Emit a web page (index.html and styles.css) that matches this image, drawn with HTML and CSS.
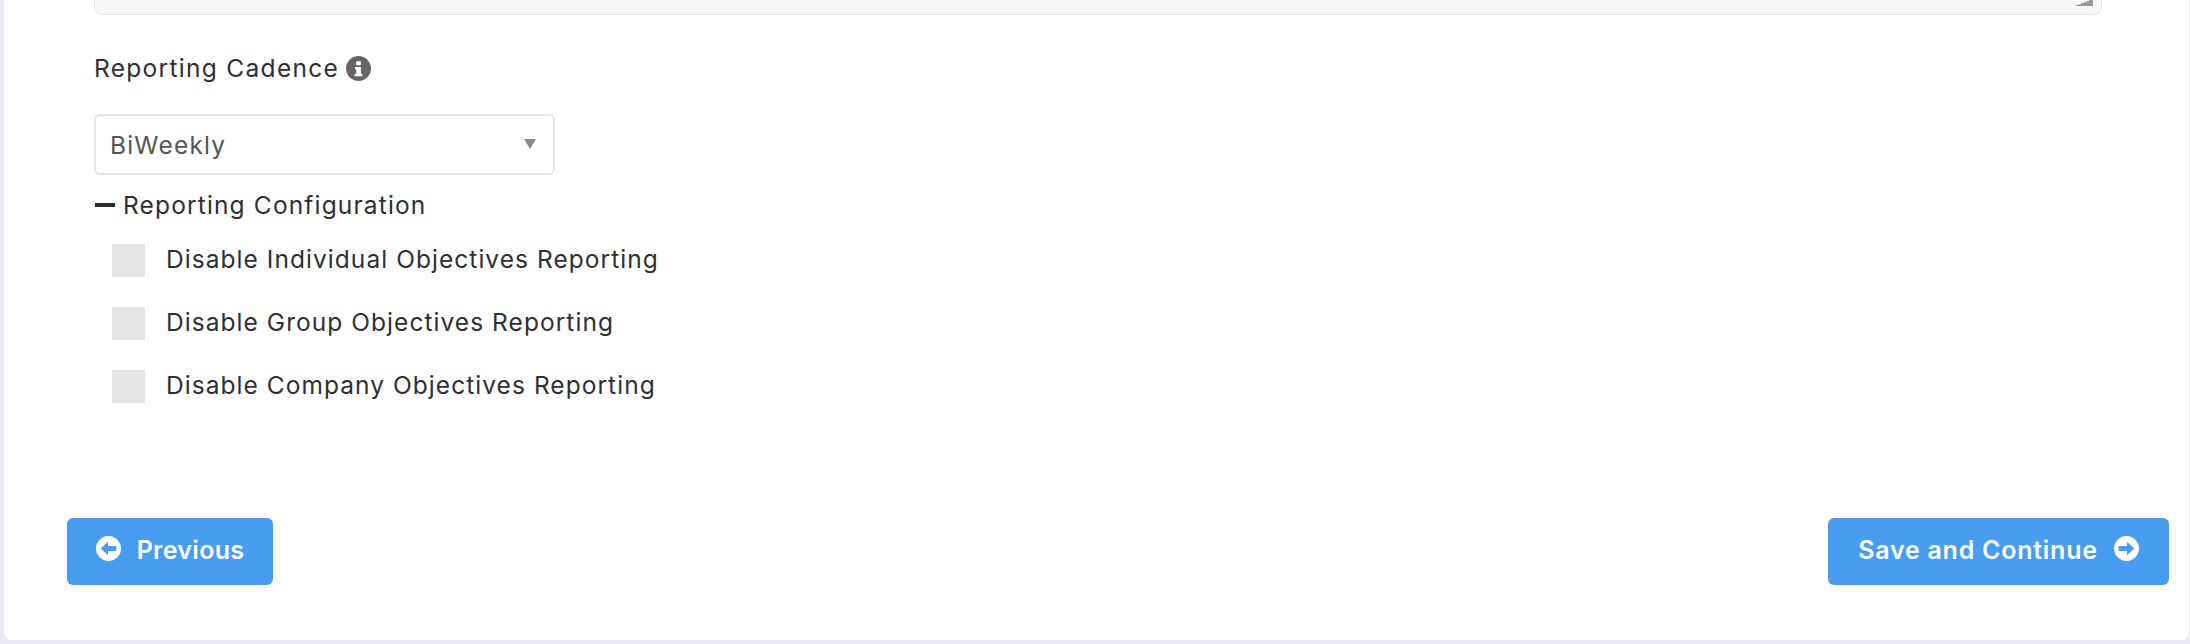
FILE: index.html
```html
<!DOCTYPE html>
<html lang="en">
<head>
<meta charset="utf-8">
<title>Reporting settings</title>
<link rel="stylesheet" href="styles.css">
</head>
<body>
<main class="card">
  <div class="form">
    <div class="textarea"><span class="resizer"></span></div>
    <div class="label-row">
      <label class="label">Reporting Cadence</label>
      <svg class="info" viewBox="0 0 26 26" aria-hidden="true"><circle cx="13" cy="13" r="13" fill="#666"/><rect x="10.5" y="5.5" width="5" height="4" rx="1" fill="#fff"/><path d="M9.5 11.5h6v7h1.5v2.5h-8v-2.5h1.7v-4.5h-1.2z" fill="#fff"/></svg>
    </div>
    <div class="select"><span>BiWeekly</span><i class="caret"></i></div>
    <div class="config-head"><i class="minus"></i><span>Reporting Configuration</span></div>
    <ul class="checks">
      <li class="check"><i class="box"></i><span class="check-text">Disable Individual Objectives Reporting</span></li>
      <li class="check"><i class="box"></i><span class="check-text">Disable Group Objectives Reporting</span></li>
      <li class="check"><i class="box"></i><span class="check-text">Disable Company Objectives Reporting</span></li>
    </ul>
  </div>
  <div class="actions">
    <button class="btn btn-prev" type="button">
      <svg class="btn-icon" viewBox="0 0 24 24" aria-hidden="true"><circle cx="12" cy="12" r="12" fill="#fff"/><path d="M4.5 12l7-6.5v4h8v5h-8v4z" fill="#489cf2"/></svg>
      <span class="btn-text">Previous</span>
    </button>
    <button class="btn btn-next" type="button">
      <span class="btn-text">Save and Continue</span>
      <svg class="btn-icon" viewBox="0 0 24 24" aria-hidden="true"><circle cx="12" cy="12" r="12" fill="#fff"/><path d="M19.5 12l-7-6.5v4h-8v5h8v4z" fill="#489cf2"/></svg>
    </button>
  </div>
</main>
</body>
</html>
```
FILE: styles.css
```css
* { box-sizing: border-box; }
html, body { margin: 0; padding: 0; }
body {
  height: 644px;
  overflow: hidden;
  background: #e9eaf1;
  font-family: Inter, "Noto Sans", sans-serif;
  color: #2f2f33;
}
.card {
  height: 640px;
  margin-left: 4px;
  margin-right: 1px;
  background: #fff;
  border-radius: 0 0 8px 8px;
  padding-right: 20px;
}
.form { padding-left: 90px; padding-right: 67px; }
.textarea {
  height: 15px;
  background: #f7f7f7;
  border: 1px solid #e6e6e6;
  border-top: 0;
  border-radius: 0 0 8px 8px;
  display: flex;
  justify-content: flex-end;
  padding-right: 8px;
}
.resizer {
  width: 18px;
  height: 7px;
  margin-top: -1px;
  background: linear-gradient(to bottom right, transparent 50%, #999 50%);
}
.label-row {
  display: flex;
  align-items: center;
  gap: 7px;
  height: 30px;
  margin-top: 38px;
}
.label, .select, .config-head, .check { font-size: 24.5px; letter-spacing: 1.05px; }
.label { letter-spacing: 1.3px; }
.config-head { letter-spacing: 1.15px; }
.info { width: 25px; height: 25px; }
.select {
  width: 461px;
  height: 61px;
  margin-top: 31px;
  border: 2px solid #e4e4e4;
  border-radius: 6px;
  padding: 0 14px;
  display: flex;
  align-items: center;
  justify-content: space-between;
  color: #555;
  letter-spacing: 1.2px;
}
.caret {
  width: 0;
  height: 0;
  border-left: 6.5px solid transparent;
  border-right: 6.5px solid transparent;
  border-top: 10px solid #8a8a8a;
  margin-right: 3px;
  margin-bottom: 2px;
}
.config-head {
  display: flex;
  align-items: center;
  gap: 8px;
  height: 32px;
  margin-top: 14px;
}
.minus { width: 20px; height: 4px; background: #2b2b2b; margin-left: 1px; }
.checks { list-style: none; margin: 0; padding: 23px 0 0 18px; }
.check {
  display: flex;
  align-items: center;
  gap: 21px;
  height: 33px;
  margin-bottom: 30px;
}
.check-text { padding-bottom: 3px; }
.box { width: 33px; height: 33px; background: #e5e5e5; flex: none; }
.actions {
  display: flex;
  justify-content: space-between;
  padding-left: 63px;
  margin-top: 115px;
}
.btn {
  height: 67px;
  border: 0;
  border-radius: 6px;
  background: #489cf2;
  color: #fff;
  font: 600 25px Inter, "Noto Sans", sans-serif;
  letter-spacing: .75px;
  display: flex;
  align-items: center;
  gap: 16px;
  padding: 0;
}
.btn-text { padding-bottom: 3px; }
.btn-prev { width: 206px; justify-content: center; letter-spacing: .3px; }
.btn-next { width: 341px; justify-content: center; }
.btn-icon { width: 25px; height: 25px; margin-top: -7px; }
```
